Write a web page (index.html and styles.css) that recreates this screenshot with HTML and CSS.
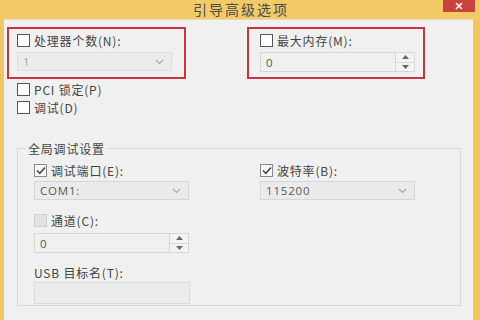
FILE: index.html
```html
<!DOCTYPE html>
<html lang="zh-CN">
<head>
<meta charset="utf-8">
<title>引导高级选项</title>
<link rel="stylesheet" href="styles.css">
</head>
<body>
<div class="window">
  <div class="titlebar">
    <span></span>
    <span class="title">引导高级选项</span>
    <span class="close"><svg width="10" height="8" viewBox="0 0 10 8"><path d="M2 1 L8 7 M8 1 L2 7" stroke="#fff" stroke-width="1.6" fill="none"/></svg></span>
  </div>
  <div class="client">
    <div class="top-row">
      <div class="hl-box hl-left">
        <label class="check-row"><span class="cb"></span><span>处理器个数(N):</span></label>
        <div class="combo disabled"><span class="val">1</span><span class="chev"><svg width="9" height="6" viewBox="0 0 9 6"><path d="M1 1 L4.5 4.5 L8 1" stroke="#a8a8a8" stroke-width="1.2" fill="none"/></svg></span></div>
      </div>
      <div class="hl-box hl-right">
        <label class="check-row"><span class="cb"></span><span>最大内存(M):</span></label>
        <div class="spin"><span class="val">0</span><span class="spin-btns"><span class="sb"><svg width="7" height="4" viewBox="0 0 7 4"><path d="M0 4 L3.5 0 L7 4Z" fill="#666"/></svg></span><span class="sb"><svg width="7" height="4" viewBox="0 0 7 4"><path d="M0 0 L3.5 4 L7 0Z" fill="#666"/></svg></span></span></div>
      </div>
    </div>
    <div class="plain-rows">
      <label class="check-row"><span class="cb"></span><span>PCI 锁定(P)</span></label>
      <label class="check-row"><span class="cb"></span><span>调试(D)</span></label>
    </div>
    <fieldset class="group">
      <legend>全局调试设置</legend>
      <div class="pair">
        <div class="field">
          <label class="check-row"><span class="cb checked"><svg width="10" height="9" viewBox="0 0 10 9"><path d="M1 4.5 L3.8 7.3 L9 1.5" stroke="#444" stroke-width="1.5" fill="none"/></svg></span><span>调试端口(E):</span></label>
          <div class="combo"><span class="val dark">COM1:</span><span class="chev"><svg width="9" height="6" viewBox="0 0 9 6"><path d="M1 1 L4.5 4.5 L8 1" stroke="#a8a8a8" stroke-width="1.2" fill="none"/></svg></span></div>
        </div>
        <div class="field">
          <label class="check-row"><span class="cb checked"><svg width="10" height="9" viewBox="0 0 10 9"><path d="M1 4.5 L3.8 7.3 L9 1.5" stroke="#444" stroke-width="1.5" fill="none"/></svg></span><span>波特率(B):</span></label>
          <div class="combo"><span class="val dark">115200</span><span class="chev"><svg width="9" height="6" viewBox="0 0 9 6"><path d="M1 1 L4.5 4.5 L8 1" stroke="#a8a8a8" stroke-width="1.2" fill="none"/></svg></span></div>
        </div>
      </div>
      <div class="field channel">
        <label class="check-row"><span class="cb grey"></span><span>通道(C):</span></label>
        <div class="spin"><span class="val">0</span><span class="spin-btns"><span class="sb"><svg width="7" height="4" viewBox="0 0 7 4"><path d="M0 4 L3.5 0 L7 4Z" fill="#666"/></svg></span><span class="sb"><svg width="7" height="4" viewBox="0 0 7 4"><path d="M0 0 L3.5 4 L7 0Z" fill="#666"/></svg></span></span></div>
      </div>
      <div class="field usb">
        <div class="label-row">USB 目标名(T):</div>
        <div class="textbox"></div>
      </div>
    </fieldset>
  </div>
</div>
</body>
</html>
```
FILE: styles.css
```css
html, body {
  margin: 0;
  padding: 0;
  width: 480px;
  height: 320px;
  overflow: hidden;
}
body {
  font-family: "Noto Sans CJK SC", "Noto Sans", sans-serif;
  font-size: 12px;
  letter-spacing: 0.8px;
  color: #444;
}
.window {
  width: 480px;
  height: 320px;
  background: #f1c660;
  display: flex;
  flex-direction: column;
}
.titlebar {
  height: 19px;
  display: grid;
  grid-template-columns: 1fr auto 1fr;
  align-items: start;
  background: #f3ca66;
}
.title {
  font-size: 14px;
  letter-spacing: 2px;
  line-height: 19px;
  color: #4a4a4a;
  padding-left: 2px;
}
.close {
  justify-self: end;
  margin-right: 5px;
  width: 32px;
  height: 12px;
  background: #c8433d;
  display: flex;
  align-items: center;
  justify-content: center;
}
.client {
  flex: 1;
  margin: 0 7px 0 4px;
  background: #f0f0f0;
  border-top: 1px solid #e6dcc0;
  padding: 7px 0 0 3px;
  box-sizing: border-box;
}
.top-row {
  display: flex;
  gap: 61px;
}
.hl-box {
  border: 2px solid #c8373d;
  display: flex;
  flex-direction: column;
  gap: 4px;
  padding: 4px 0 5px;
}
.hl-left {
  padding-left: 8px;
  width: 167px;
}
.hl-right {
  width: 163px;
  padding-left: 11px;
}
.check-row {
  display: flex;
  align-items: center;
  gap: 4px;
  height: 15px;
  line-height: 15px;
  white-space: nowrap;
}
.cb {
  width: 11px;
  height: 11px;
  border: 1px solid #555;
  background: #fff;
  flex: none;
  display: flex;
  align-items: center;
  justify-content: center;
}
.cb.checked {
  border-color: #8a8a8a;
  background: #f7f7f7;
}
.cb.grey {
  border-color: #cfcfcf;
  background: #e2e2e2;
}
.combo, .spin, .textbox {
  box-sizing: border-box;
  border: 1px solid #d6d6d6;
  background: #ebebeb;
  display: flex;
  align-items: center;
}
.combo {
  height: 19px;
  width: 155px;
  padding-left: 5px;
  justify-content: space-between;
}
.hl-left .combo {
  border-color: #dedede;
  background: #ececec;
}
.val {
  font-family: "Open Sans", "Noto Sans CJK SC", sans-serif;
  font-size: 11.5px;
  color: #a6a6a6;
  line-height: 17px;
}
.val.dark {
  color: #5a5a5a;
}
.spin .val {
  color: #555;
}
.chev {
  width: 20px;
  display: flex;
  justify-content: center;
  margin-right: 2px;
}
.spin {
  height: 20px;
  width: 155px;
  padding-left: 5px;
  justify-content: space-between;
  background: #f0f0f0;
}
.spin-btns {
  align-self: stretch;
  width: 18px;
  display: flex;
  flex-direction: column;
  border-left: 1px solid #d6d6d6;
  background: #f3f3f3;
}
.sb {
  flex: 1;
  display: flex;
  align-items: center;
  justify-content: center;
}
.sb + .sb {
  border-top: 1px solid #d9d9d9;
}
.plain-rows {
  display: flex;
  flex-direction: column;
  gap: 3px;
  padding: 3px 0 0 10px;
}
.group {
  margin: 26px 0 0 10px;
  width: 444px;
  height: 165px;
  box-sizing: border-box;
  border: 1px solid #d8d8d8;
  padding: 7px 0 0 16px;
  min-width: 0;
}
.group legend {
  padding: 0 3px;
  margin-left: -9px;
  line-height: 15px;
  color: #444;
}
.pair {
  display: flex;
  gap: 70px;
}
.field {
  display: flex;
  flex-direction: column;
  gap: 3px;
  width: 156px;
}
.channel {
  margin-top: 13px;
  gap: 5px;
}
.usb {
  margin-top: 12px;
  gap: 2px;
}
.label-row {
  height: 15px;
  line-height: 15px;
  white-space: nowrap;
}
.textbox {
  height: 22px;
  width: 156px;
  background: #ececec;
  border-color: #dadada;
}
```
